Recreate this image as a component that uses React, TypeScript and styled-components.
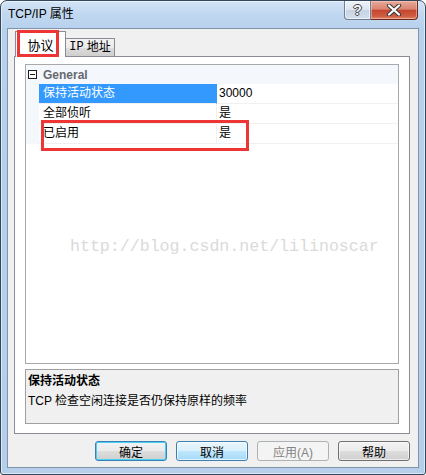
import React from 'react';
import styled, {createGlobalStyle, css} from 'styled-components';

const UI_FONT = `"Liberation Sans", "Noto Sans CJK SC", sans-serif`;

const GlobalStyle = createGlobalStyle`
  html, body {
    margin: 0;
    padding: 0;
    background: #ffffff;
  }
  body {
    font-family: ${UI_FONT};
  }
`;

type BtnKind = 'default' | 'hot' | 'normal' | 'disabled';

const rows = [
    {name: '保持活动状态', value: '30000', selected: true},
    {name: '全部侦听', value: '是'},
    {name: '已启用', value: '是', marked: true},
];

const buttons: {label: string; kind: BtnKind}[] = [
    {label: '确定', kind: 'default'},
    {label: '取消', kind: 'hot'},
    {label: '应用(A)', kind: 'disabled'},
    {label: '帮助', kind: 'normal'},
];

export default function App() {
    return (
        <>
            <GlobalStyle/>
            <Window>
                {/* 標題列 */}
                <TitleBar>
                    <Title>TCP/IP 属性</Title>
                    <CaptionButtons>
                        <HelpButton>?</HelpButton>
                        <CloseButton>
                            <svg width="16" height="12" viewBox="0 0 16 12">
                                <path d="M3 1.5 L13 10.5 M13 1.5 L3 10.5" stroke="#3b3b3b" strokeWidth="4.2" strokeLinecap="round"/>
                                <path d="M3 1.5 L13 10.5 M13 1.5 L3 10.5" stroke="#ffffff" strokeWidth="2.2" strokeLinecap="round"/>
                            </svg>
                        </CloseButton>
                    </CaptionButtons>
                </TitleBar>

                <Client>
                    <TabStrip>
                        <Tab active>
                            协议
                            <TabMark/>
                        </Tab>
                        <Tab>
                            <Mono>IP</Mono> 地址
                        </Tab>
                    </TabStrip>

                    <Panel>
                        <Grid>
                            <CategoryRow>
                                <Collapse/>
                                <CategoryLabel>General</CategoryLabel>
                            </CategoryRow>
                            {rows.map(r => (
                                <PropRow key={r.name}>
                                    <Margin/>
                                    <NameCell selected={r.selected}>{r.name}</NameCell>
                                    <ValueCell>{r.value}</ValueCell>
                                    {r.marked && <RowMark/>}
                                </PropRow>
                            ))}
                        </Grid>

                        <Description>
                            <DescTitle>保持活动状态</DescTitle>
                            <DescText>TCP 检查空闲连接是否仍保持原样的频率</DescText>
                        </Description>

                        <Watermark>http://blog.csdn.net/lilinoscar</Watermark>
                    </Panel>

                    <ButtonRow>
                        {buttons.map(b => (
                            <DialogButton key={b.label} kind={b.kind}>{b.label}</DialogButton>
                        ))}
                    </ButtonRow>
                </Client>
            </Window>
        </>
    );
}


const Window = styled.div`
    width: 426px;
    height: 475px;
    box-sizing: border-box;
    border: 1px solid #34465b;
    border-radius: 7px 7px 3px 3px;
    background: linear-gradient(to bottom, #d3e4f6 0px, #c0d7f0 14px, #b7d0ec 28px, #b5cfeb 100%);
    box-shadow: inset 0 0 0 1px rgba(255, 255, 255, 0.55);
    padding: 0 6px 6px 6px;
    display: flex;
    flex-direction: column;
`;

const TitleBar = styled.div`
    height: 27px;
    display: flex;
    align-items: flex-start;
`;

const Title = styled.div`
    padding-left: 1px;
    line-height: 27px;
    font-size: 12px;
    color: #000;
    flex: 1;
`;

const CaptionButtons = styled.div`
    display: flex;
    margin-right: 1px;
    height: 19px;
`;

const HelpButton = styled.div`
    width: 27px;
    height: 19px;
    box-sizing: border-box;
    border: 1px solid #6e8096;
    border-top: none;
    border-radius: 0 0 0 4px;
    background: linear-gradient(to bottom, #eef3f9 0%, #dbe5f0 48%, #c6d4e4 52%, #d3dfec 100%);
    box-shadow: inset 0 0 0 1px rgba(255, 255, 255, 0.6);
    display: flex;
    align-items: center;
    justify-content: center;
    font: bold 14px "Liberation Sans", sans-serif;
    color: #f6f6f6;
    text-shadow: 1px 0 0 #444, -1px 0 0 #444, 0 1px 0 #444, 0 -1px 0 #444;
`;

const CloseButton = styled.div`
    width: 47px;
    height: 19px;
    box-sizing: border-box;
    border: 1px solid #6b2a1f;
    border-top: none;
    border-left: none;
    border-radius: 0 0 4px 0;
    background: linear-gradient(to bottom, #e9a99a 0%, #d98571 45%, #c5472f 52%, #cf5d42 85%, #e0896a 100%);
    box-shadow: inset 0 0 0 1px rgba(255, 220, 210, 0.45);
    display: flex;
    align-items: center;
    justify-content: center;
`;

const Client = styled.div`
    flex: 1;
    background: #f0f0f0;
    border: 1px solid #7f93aa;
    display: flex;
    flex-direction: column;
    padding: 2px 8px 0 6px;
`;

const TabStrip = styled.div`
    height: 25px;
    display: flex;
    align-items: flex-end;
    padding-left: 1px;
`;

const Tab = styled.div<{active?: boolean}>`
    position: relative;
    box-sizing: border-box;
    border: 1px solid #898c95;
    border-bottom: none;
    font-size: 12px;
    color: #000;
    display: flex;
    justify-content: center;
    ${p => p.active ? css`
        width: 51px;
        height: 26px;
        margin-bottom: -1px;
        background: #ffffff;
        z-index: 1;
        padding-top: 6px;
        font-size: 13px;
        line-height: 16px;
    ` : css`
        width: 50px;
        height: 18px;
        margin-left: -1px;
        background: linear-gradient(to bottom, #f2f2f2 0%, #ebebeb 50%, #dddddd 51%, #cfcfcf 100%);
        line-height: 17px;
    `}
`;

const Mono = styled.span`
    font-family: "Liberation Mono", monospace;
    margin-right: 3px;
`;

const TabMark = styled.div`
    position: absolute;
    left: 1px;
    top: -2px;
    width: 42px;
    height: 27px;
    box-sizing: border-box;
    border: 3px solid #ee3535;
`;

const Panel = styled.div`
    position: relative;
    height: 378px;
    box-sizing: border-box;
    border: 1px solid #898c95;
    background: #ffffff;
    padding: 7px 10px 0 10px;
    display: flex;
    flex-direction: column;
    gap: 5px;
`;

const Grid = styled.div`
    height: 300px;
    box-sizing: border-box;
    border: 1px solid #a9a9a9;
    background: #ffffff;
    font-size: 12px;
`;

const CategoryRow = styled.div`
    height: 19px;
    background: #f4f7fc;
    display: flex;
    align-items: center;
`;

const Collapse = styled.div`
    position: relative;
    width: 9px;
    height: 9px;
    box-sizing: border-box;
    border: 1px solid #1e1e1e;
    margin-left: 2px;
    background: #fff;

    &:after {
        content: '';
        position: absolute;
        left: 1px;
        right: 1px;
        top: 3px;
        height: 1px;
        background: #1e1e1e;
    }
`;

const CategoryLabel = styled.div`
    margin-left: 6px;
    font-weight: bold;
    color: #666a70;
    font-family: "Liberation Sans", sans-serif;
    font-size: 12px;
`;

const PropRow = styled.div`
    position: relative;
    height: 20px;
    display: flex;
    line-height: 19px;
`;

const Margin = styled.div`
    width: 13px;
    background: #f4f7fc;
`;

const NameCell = styled.div<{selected?: boolean}>`
    width: 178px;
    box-sizing: border-box;
    padding-left: 4px;
    border-right: 1px solid #f0f0f0;
    border-bottom: 1px solid #f0f0f0;
    ${p => p.selected ? css`
        background: #3399ff;
        color: #ffffff;
        border-right-color: #3399ff;
    ` : css`
        color: #000;
    `}
`;

const ValueCell = styled.div`
    flex: 1;
    padding-left: 2px;
    border-bottom: 1px solid #f0f0f0;
    color: #000;
`;

const RowMark = styled.div`
    position: absolute;
    left: 15px;
    top: -4px;
    width: 208px;
    height: 31px;
    box-sizing: border-box;
    border: 3px solid #ee3535;
`;

const Description = styled.div`
    height: 55px;
    box-sizing: border-box;
    border: 1px solid #a0a0a0;
    background: #f0f0f0;
    padding: 3px 2px 0 2px;
    font-size: 12px;
    line-height: 16px;
    color: #000;
`;

const DescTitle = styled.div`
    font-weight: bold;
`;

const DescText = styled.div`
    margin-top: 4px;
`;

const Watermark = styled.div`
    position: absolute;
    left: 55px;
    top: 182px;
    font-family: "Liberation Mono", monospace;
    font-size: 16.6px;
    line-height: 1;
    color: #dadada;
    white-space: nowrap;
    pointer-events: none;
`;

const ButtonRow = styled.div`
    margin-top: 7px;
    display: flex;
    justify-content: flex-end;
    gap: 9px;
`;

const DialogButton = styled.div<{kind: BtnKind}>`
    width: 72px;
    height: 20px;
    box-sizing: border-box;
    border-radius: 3px;
    display: flex;
    align-items: center;
    justify-content: center;
    font-size: 12px;
    color: #000;
    ${p => p.kind === 'disabled' ? css`
        border: 1px solid #adb2b5;
        background: #f4f4f4;
        color: #838383;
    ` : p.kind === 'hot' ? css`
        border: 1px solid #3c7fb1;
        background: linear-gradient(to bottom, #eaf6fd 0%, #d9f0fc 50%, #bee6fd 51%, #a7d9f5 100%);
        box-shadow: inset 0 0 0 1px rgba(255, 255, 255, 0.7);
    ` : p.kind === 'default' ? css`
        border: 1px solid #3c7fb1;
        background: linear-gradient(to bottom, #f2f2f2 0%, #ebebeb 50%, #dddddd 51%, #cfcfcf 100%);
        box-shadow: inset 0 0 0 1px #48d1f6;
    ` : css`
        border: 1px solid #707070;
        background: linear-gradient(to bottom, #f2f2f2 0%, #ebebeb 50%, #dddddd 51%, #cfcfcf 100%);
        box-shadow: inset 0 0 0 1px rgba(255, 255, 255, 0.6);
    `}
`;
